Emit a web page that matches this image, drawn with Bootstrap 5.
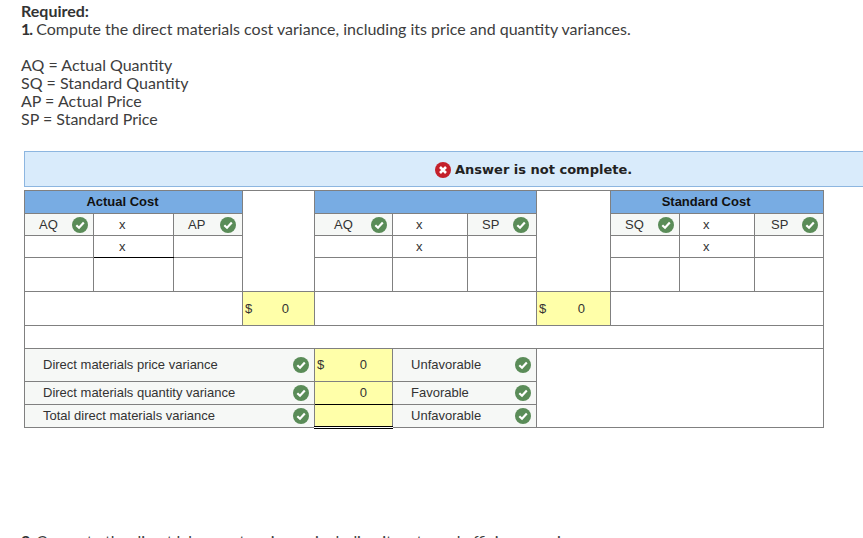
<!DOCTYPE html>
<html lang="en">
<head>
<meta charset="utf-8">
<title>Direct materials cost variance</title>
<link href="https://cdn.jsdelivr.net/npm/bootstrap@5.3.0/dist/css/bootstrap.min.css" rel="stylesheet">
<style>
html,body{height:538px;overflow:hidden}
body{background:#fff;color:#3d3d3d;font-family:Lato,"Liberation Sans",sans-serif;font-size:16px;line-height:18px;padding:2px 0 0 21px}
.req-head{font-weight:700;color:#333}
.req-num{font-weight:700;letter-spacing:-1px;color:#333}
.req-gap{margin-top:18px}
.ans-banner{margin:23px 0 3px 3px;height:36px;background:#d9ebfb;border:1px solid #8db6e0;border-right:0;font-family:"DejaVu Sans",sans-serif;font-weight:700;font-size:13px;color:#222;padding:1px 0 0 410px}
.ans-banner svg{width:16px;height:16px;margin-right:4px}
.var-table{margin-left:3px;border-collapse:collapse;table-layout:fixed;width:799px;font-family:"Liberation Sans",sans-serif;font-size:13px;line-height:14px;color:#333}
.var-table td{border:1px solid #808080;padding:0;vertical-align:middle;overflow:hidden}
.r23{height:23px}.r22{height:22px}.r34{height:34px}.r33{height:33px}
.cw69{width:69px}.cw80{width:80px}.cw72{width:72px}.cw78{width:78px}.cw75{width:75px}.cw74{width:74px}
.var-table td.blue-head{background:#78ace3;color:#111;font-weight:700;text-align:center;padding-right:22px}
.var-table td.tint{background:#f6f8f6}
.var-table td.yel{background:#ffffa9}
.var-table td.ul-black{border-bottom-color:#000}
.var-table td.dbl-black{border-bottom:3px double #000}
.var-table td.mult{padding-left:25px}
.var-table td.mult-b{padding-left:23px}
.cell-flex{display:flex;align-items:center;justify-content:space-between}
.pl14{padding-left:14px}.pl16{padding-left:16px}.pl19{padding-left:19px}
.pr5{padding-right:5px}.pr6{padding-right:6px}.pr7{padding-right:7px}
.lbl{padding-left:18px;padding-right:5px}
.uf{padding-left:18px;padding-right:5px}
.amt{display:flex;justify-content:space-between;padding:0 25px 0 2px}
.var-table td.amt-r{text-align:right;padding-right:25px}
.tick{width:16px;height:16px;flex:none;display:block}
.next-q{margin-top:103px}
</style>
</head>
<body>
<svg width="0" height="0" class="position-absolute">
  <symbol id="ok" viewBox="0 0 16 16"><circle cx="8" cy="8" r="8" fill="#5a8c58"/><path d="M4.3 8.3 7 10.8 11.8 5.6" fill="none" stroke="#fff" stroke-width="2.2"/></symbol>
  <symbol id="bad" viewBox="0 0 16 16"><circle cx="8" cy="8" r="8" fill="#c4202b"/><path d="M5 5 11 11M11 5 5 11" fill="none" stroke="#fff" stroke-width="2.6"/></symbol>
</svg>

<div class="req-head">Required:</div>
<div><span class="req-num">1.</span> Compute the direct materials cost variance, including its price and quantity variances.</div>
<div class="req-gap">AQ = Actual Quantity</div>
<div>SQ = Standard Quantity</div>
<div>AP = Actual Price</div>
<div>SP = Standard Price</div>

<div class="ans-banner d-flex align-items-center"><svg><use href="#bad"/></svg>Answer is not complete.</div>

<table class="var-table">
  <colgroup>
    <col class="cw69"><col class="cw80"><col class="cw69"><col class="cw72">
    <col class="cw78"><col class="cw75"><col class="cw69"><col class="cw74">
    <col class="cw69"><col class="cw75"><col class="cw69">
  </colgroup>
  <tr class="r23">
    <td colspan="3" class="blue-head">Actual Cost</td>
    <td rowspan="4"></td>
    <td colspan="3" class="blue-head"></td>
    <td rowspan="4"></td>
    <td colspan="3" class="blue-head">Standard Cost</td>
  </tr>
  <tr class="r22">
    <td class="tint"><div class="cell-flex pl14 pr5"><span>AQ</span><svg class="tick"><use href="#ok"/></svg></div></td>
    <td class="mult">x</td>
    <td class="tint"><div class="cell-flex pl14 pr6"><span>AP</span><svg class="tick"><use href="#ok"/></svg></div></td>
    <td class="tint"><div class="cell-flex pl19 pr5"><span>AQ</span><svg class="tick"><use href="#ok"/></svg></div></td>
    <td class="mult-b">x</td>
    <td class="tint"><div class="cell-flex pl14 pr7"><span>SP</span><svg class="tick"><use href="#ok"/></svg></div></td>
    <td class="tint"><div class="cell-flex pl14 pr5"><span>SQ</span><svg class="tick"><use href="#ok"/></svg></div></td>
    <td class="mult-b">x</td>
    <td class="tint"><div class="cell-flex pl16 pr5"><span>SP</span><svg class="tick"><use href="#ok"/></svg></div></td>
  </tr>
  <tr class="r22">
    <td></td><td class="mult ul-black">x</td><td></td>
    <td></td><td class="mult-b">x</td><td></td>
    <td></td><td class="mult-b">x</td><td></td>
  </tr>
  <tr class="r34">
    <td></td><td></td><td></td>
    <td></td><td></td><td></td>
    <td></td><td></td><td></td>
  </tr>
  <tr class="r34">
    <td colspan="3"></td>
    <td class="yel"><div class="amt"><span>$</span><span>0</span></div></td>
    <td colspan="3"></td>
    <td class="yel"><div class="amt"><span>$</span><span>0</span></div></td>
    <td colspan="3"></td>
  </tr>
  <tr class="r23"><td colspan="11"></td></tr>
  <tr class="r33">
    <td colspan="4" class="tint"><div class="cell-flex lbl"><span>Direct materials price variance</span><svg class="tick"><use href="#ok"/></svg></div></td>
    <td class="yel"><div class="amt"><span>$</span><span>0</span></div></td>
    <td colspan="2" class="tint"><div class="cell-flex uf"><span>Unfavorable</span><svg class="tick"><use href="#ok"/></svg></div></td>
    <td colspan="4" rowspan="3"></td>
  </tr>
  <tr class="r23">
    <td colspan="4" class="tint"><div class="cell-flex lbl"><span>Direct materials quantity variance</span><svg class="tick"><use href="#ok"/></svg></div></td>
    <td class="yel amt-r ul-black">0</td>
    <td colspan="2" class="tint"><div class="cell-flex uf"><span>Favorable</span><svg class="tick"><use href="#ok"/></svg></div></td>
  </tr>
  <tr class="r23">
    <td colspan="4" class="tint"><div class="cell-flex lbl"><span>Total direct materials variance</span><svg class="tick"><use href="#ok"/></svg></div></td>
    <td class="yel dbl-black"></td>
    <td colspan="2" class="tint"><div class="cell-flex uf"><span>Unfavorable</span><svg class="tick"><use href="#ok"/></svg></div></td>
  </tr>
</table>

<div class="next-q"><span class="req-num">2.</span> Compute the direct labor cost variance, including its rate and efficiency variances.</div>
<script src="https://cdn.jsdelivr.net/npm/bootstrap@5.3.0/dist/js/bootstrap.bundle.min.js"></script>
</body>
</html>
